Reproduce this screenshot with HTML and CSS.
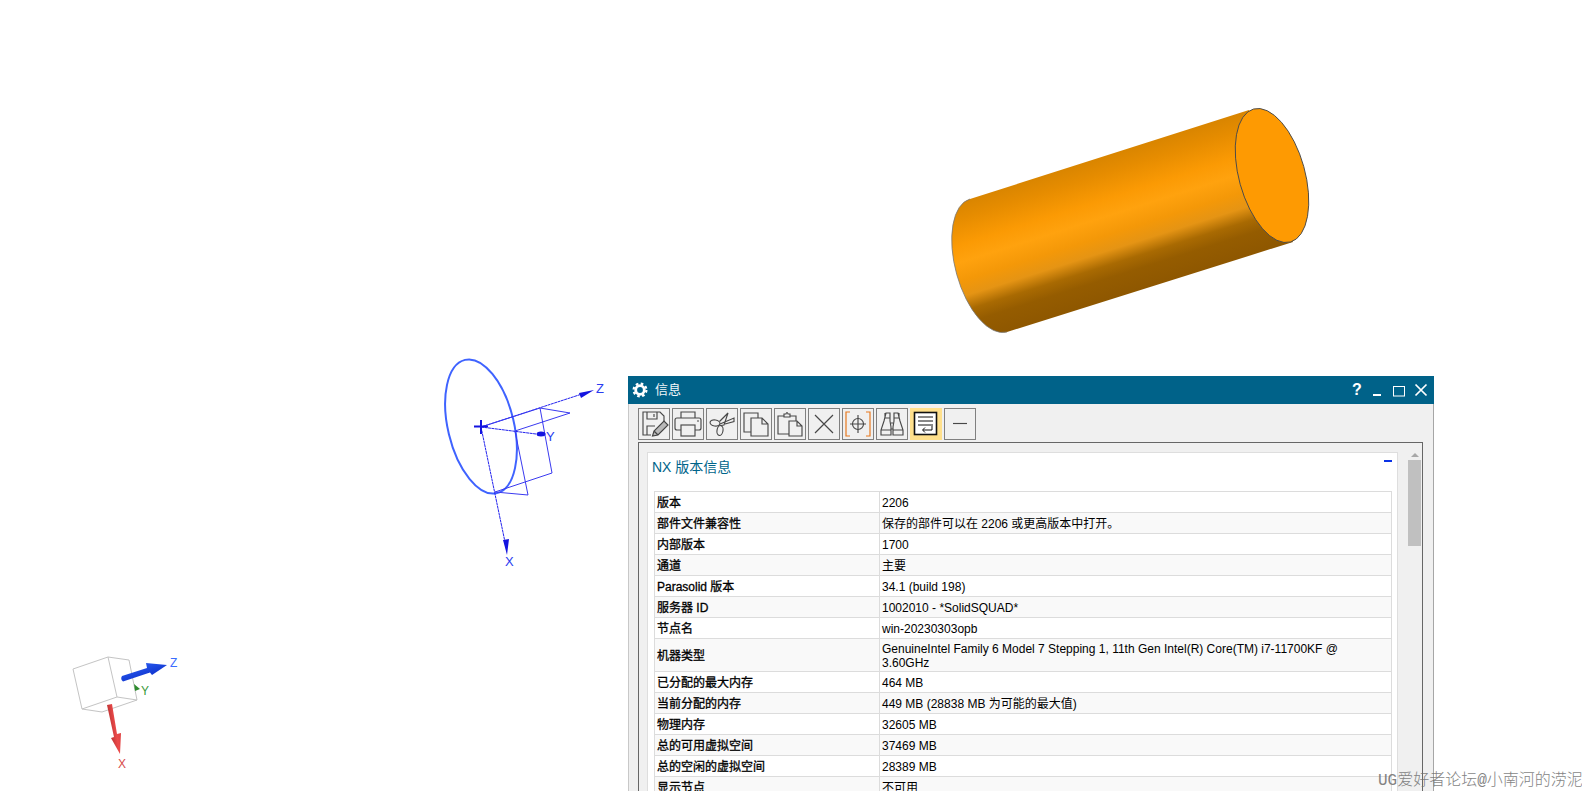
FILE: index.html
```html
<!DOCTYPE html>
<html lang="zh-CN">
<head>
<meta charset="utf-8">
<title>信息</title>
<link rel="stylesheet" href="styles.css">
</head>
<body>
<main class="canvas">
  <svg class="scene" width="1582" height="791" viewBox="0 0 1582 791" xmlns="http://www.w3.org/2000/svg">
    <defs>
      <linearGradient id="cyl" gradientUnits="userSpaceOnUse" x1="1250" y1="110" x2="1291.7" y2="242.2">
        <stop offset="0" stop-color="#d98500"/>
        <stop offset=".12" stop-color="#e68c00"/>
        <stop offset=".3" stop-color="#fb9a04"/>
        <stop offset=".42" stop-color="#ffa20e"/>
        <stop offset=".55" stop-color="#f49808"/>
        <stop offset=".66" stop-color="#e59414"/>
        <stop offset=".76" stop-color="#a96a02"/>
        <stop offset=".85" stop-color="#955c00"/>
        <stop offset="1" stop-color="#8e5700"/>
      </linearGradient>
      <linearGradient id="xarrow" gradientUnits="userSpaceOnUse" x1="107" y1="730" x2="122" y2="728">
        <stop offset="0" stop-color="#a82a2a"/><stop offset=".6" stop-color="#ec4a4a"/><stop offset="1" stop-color="#d94040"/>
      </linearGradient>
      <linearGradient id="zarrow" gradientUnits="userSpaceOnUse" x1="140" y1="663" x2="146" y2="681">
        <stop offset="0" stop-color="#2a5cf0"/><stop offset="1" stop-color="#0a2cc8"/>
      </linearGradient>
    </defs>

    <path d="M1249 110 L970 199 A69 33 74.5 0 0 1007 332 L1293 242 Z" fill="url(#cyl)"/>
    <path d="M970 199 A69 33 74.5 0 0 1007 332" fill="none" stroke="#777" stroke-width=".8"/>
    <ellipse cx="1272" cy="175.5" rx="69" ry="33" transform="rotate(74.5 1272 175.5)" fill="#fe9a02" stroke="#4a4a4a" stroke-width=".9"/>

    <g class="datum">
      <ellipse class="datum-ring" cx="481" cy="426.5" rx="68.500" ry="33" transform="rotate(76.5 481 426.5)"/>
      <path class="datum-line" d="M481 427L582 394M481 427L505 542M481 427L536 434"/>
      <path class="datum-plane" d="M481 427L540 408L570 413L515 431L528 495L495 492L552 473L540 408"/>
      <path class="datum-cross" d="M474 426.5H488M481 420V434"/>
      <path class="datum-head" d="M594 390L579 393L581 398Z"/>
      <path class="datum-head" d="M507 555L503 540L509 539Z"/>
      <ellipse class="datum-head" cx="541" cy="434" rx="4.500" ry="2.500"/>
      <text class="datum-label" x="596" y="393">Z</text>
      <text class="datum-label" x="546" y="441">Y</text>
      <text class="datum-label" x="505" y="566">X</text>
    </g>

    <g class="gizmo">
      <path class="gizmo-cube" d="M73 669L108 657L129 660L137 700L102 712L82 709ZM108 657L117 697L82 709M117 697L137 700"/>
      <path d="M122 676L147 668L146 663L167 665L152 675L150 672.500L123 681.500Q120 679 122 676Z" fill="url(#zarrow)"/>
      <path d="M134 684L140 689L135 691Z" fill="#2e8b2e"/>
      <path d="M107 705L112 704L117 734L121 733L120 754L111 738L114 737Z" fill="url(#xarrow)"/>
      <text class="gizmo-z" x="170" y="667">Z</text>
      <text class="gizmo-y" x="141" y="695">Y</text>
      <text class="gizmo-x" x="118" y="768">X</text>
    </g>
  </svg>

  <section class="dialog">
    <header class="titlebar">
      <svg class="gear" width="16" height="16" viewBox="0 0 16 16">
        <circle cx="8" cy="8" r="4.3" fill="none" stroke="#fff" stroke-width="2.8"/>
        <circle cx="8" cy="8" r="6.4" fill="none" stroke="#fff" stroke-width="2.2" stroke-dasharray="2.6 2.42"/>
      </svg>
      <span class="title">信息</span>
      <div class="window-controls">
        <span class="help">?</span>
        <svg width="14" height="14" viewBox="0 0 14 14"><path d="M3 12H11" stroke="#fff" stroke-width="2"/></svg>
        <svg width="14" height="14" viewBox="0 0 14 14"><rect x="1.5" y="3.5" width="11" height="9.5" fill="none" stroke="#fff"/></svg>
        <svg width="14" height="14" viewBox="0 0 14 14"><path d="M1.5 1.5L12.5 12.5M12.5 1.5L1.5 12.5" stroke="#fff" stroke-width="1.7"/></svg>
      </div>
    </header>

    <div class="toolbar">
      <button class="tool" type="button"><svg viewBox="0 0 30 30"><path d="M12 26H4V3H21L25 7V13"/><path d="M8 3V10H18V3M8 26V17H16M15 5V8"/><path class="thick" d="M13.500 27L15 22L25 12L29 16L19 26ZM15 22L19 26"/></svg></button>
      <button class="tool" type="button"><svg viewBox="0 0 30 30"><path d="M8 9V3H22V9"/><path d="M8 21H4Q2 21 2 19V11Q2 9 4 9H26Q28 9 28 11V19Q28 21 26 21H22"/><rect x="8" y="16" width="14" height="11"/><path d="M24 12H26"/></svg></button>
      <button class="tool" type="button"><svg viewBox="0 0 30 30"><ellipse cx="8" cy="14" rx="5" ry="3" transform="rotate(10 8 14)"/><ellipse cx="13" cy="21.500" rx="3" ry="5" transform="rotate(10 13 21.500)"/><path d="M12.500 12.500L21 4L17 16L14 16.500M13 15L27 9L27 12.500L18 15"/></svg></button>
      <button class="tool" type="button"><svg viewBox="0 0 30 30"><path d="M10 23H3V4H17V9"/><path d="M10 9H21L27 15V27H10ZM21 9V15H27"/></svg></button>
      <button class="tool" type="button"><svg viewBox="0 0 30 30"><path d="M14 25H3V7H9M15 7H21V12"/><path d="M9 7V5H11Q12 2 13 5H15V8H9Z"/><path d="M14 12H22L27 17V27H14ZM22 12V17H27"/></svg></button>
      <button class="tool" type="button"><svg viewBox="0 0 30 30"><path d="M6 6L24 24M24 6L6 24"/></svg></button>
      <button class="tool" type="button"><svg viewBox="0 0 30 30"><path class="orange" d="M7 3H3V27H7M23 3H27V27H23"/><circle cx="15" cy="15" r="5.500"/><path d="M15 6V24M7 15H23"/></svg></button>
      <button class="tool" type="button"><svg viewBox="0 0 30 30"><path d="M9 4H13V12L14 18V26H4V21L7 12ZM21 4H17V12L16 18V26H26V21L23 12ZM14 14H16M16 20H14M8 4V9H13M22 4V9H17M4 21H14M16 21H26"/></svg></button>
      <button class="tool tool-on" type="button"><svg viewBox="0 0 30 30"><rect class="page" x="3.500" y="3.500" width="22" height="22"/><path class="ink" d="M7 8H22M7 12H22M7 16H22M21 17V21H12M14 18.500L11.500 21L14 23.500"/></svg></button>
      <button class="tool" type="button"><svg viewBox="0 0 30 30"><path d="M8 14.500H22"/></svg></button>
    </div>

    <div class="panel">
      <div class="sheet">
        <div class="sheet-head">
          <h1 class="sheet-title">NX 版本信息</h1>
          <span class="collapse"></span>
        </div>
        <table class="info">
          <colgroup><col class="col-key"><col></colgroup>
          <tbody>
            <tr><th>版本</th><td>2206</td></tr>
            <tr><th>部件文件兼容性</th><td>保存的部件可以在 2206 或更高版本中打开。</td></tr>
            <tr><th>内部版本</th><td>1700</td></tr>
            <tr><th>通道</th><td>主要</td></tr>
            <tr><th>Parasolid 版本</th><td>34.1 (build 198)</td></tr>
            <tr><th>服务器 ID</th><td>1002010 - *SolidSQUAD*</td></tr>
            <tr><th>节点名</th><td>win-20230303opb</td></tr>
            <tr><th>机器类型</th><td>GenuineIntel Family 6 Model 7 Stepping 1, 11th Gen Intel(R) Core(TM) i7-11700KF @ 3.60GHz</td></tr>
            <tr><th>已分配的最大内存</th><td>464 MB</td></tr>
            <tr><th>当前分配的内存</th><td>449 MB (28838 MB 为可能的最大值)</td></tr>
            <tr><th>物理内存</th><td>32605 MB</td></tr>
            <tr><th>总的可用虚拟空间</th><td>37469 MB</td></tr>
            <tr><th>总的空闲的虚拟空间</th><td>28389 MB</td></tr>
            <tr><th>显示节点</th><td>不可用</td></tr>
          </tbody>
        </table>
      </div>
      <div class="scrollbar">
        <span class="scroll-up"></span>
        <span class="scroll-thumb"></span>
      </div>
    </div>
  </section>

  <div class="watermark">UG爱好者论坛@小南河的涝泥</div>
</main>
</body>
</html>
```

FILE: styles.css
```css
* { box-sizing: border-box; }

html, body {
  margin: 0;
  height: 100%;
  overflow: hidden;
  background: #fff;
}

.canvas {
  position: relative;
  width: 1582px;
  height: 791px;
  overflow: hidden;
  font-family: "Liberation Sans", "Noto Sans CJK SC", sans-serif;
  font-size: 12px;
  color: #000;
}

.scene {
  position: absolute;
  left: 0;
  top: 0;
  display: block;
}

.datum-ring { fill: none; stroke: #3f63ff; stroke-width: 2; }
.datum-line { fill: none; stroke: #2222ee; stroke-width: 1; stroke-dasharray: 3 .5; }
.datum-plane { fill: none; stroke: #3a3af0; stroke-width: 1; }
.datum-cross { fill: none; stroke: #1414e0; stroke-width: 2; }
.datum-head { fill: #1414e0; }
.datum-label { fill: #2a3cf0; font-family: "Liberation Sans", sans-serif; font-size: 13px; }

.gizmo-cube { fill: none; stroke: #c4c4c4; stroke-width: 1; }
.gizmo-z, .gizmo-y, .gizmo-x { font-family: "Liberation Sans", sans-serif; font-size: 12px; }
.gizmo-z { fill: #3a6cff; }
.gizmo-y { fill: #3a9a3a; }
.gizmo-x { fill: #d84a4a; }

.dialog {
  position: absolute;
  left: 628px;
  top: 376px;
  width: 806px;
  height: 415px;
  display: flex;
  flex-direction: column;
  background: #f0f0f0;
  border-right: 1px solid #a6a6a6;
  border-left: 1px solid #c8c8c8;
}

.titlebar {
  flex: none;
  height: 28px;
  margin: 0 -1px 0 -1px;
  padding: 0 6px 0 4px;
  display: flex;
  align-items: center;
  background: #006289;
  color: #fff;
}

.gear { flex: none; }

.title {
  margin: -3px 0 0 7px;
  font-size: 13px;
  color: #f2f7fa;
}

.window-controls {
  margin-left: auto;
  display: flex;
  align-items: center;
  gap: 8px;
}

.window-controls svg { display: block; }

.help {
  width: 14px;
  margin-right: -2px;
  text-align: center;
  font-size: 16px;
  font-weight: 700;
  line-height: 16px;
}

.toolbar {
  flex: none;
  display: flex;
  gap: 2px;
  margin: 4px 0 0 9px;
  height: 32px;
}

.tool {
  width: 32px;
  height: 32px;
  margin: 0;
  padding: 0;
  border: 1px solid #808080;
  background: #f0f0f0;
}

.tool svg {
  display: block;
  width: 30px;
  height: 30px;
  fill: none;
  stroke: #484848;
  stroke-width: 1.15;
}

.tool .thick { stroke: #444; fill: #b8b8b8; }
.tool .orange { stroke: #e8791e; stroke-width: 1.2; }

.tool-on {
  border-color: #ffe08c;
  background: #ffe08c;
}

.tool .page { fill: #fff; stroke: #111; stroke-width: 1.6; }
.tool .ink { stroke: #111; stroke-width: 1; }

.panel {
  flex: 1;
  min-height: 0;
  display: flex;
  margin: 2px 10px 0 9px;
  padding: 9px 1px 0 8px;
  border: 1px solid #666;
  border-bottom: 0;
  overflow: hidden;
}

.sheet {
  flex: none;
  width: 751px;
  padding: 0 6px;
  background: #fff;
  border: 1px solid #dedede;
  border-bottom: 0;
  overflow: hidden;
}

.sheet-head {
  height: 38px;
  display: flex;
  justify-content: space-between;
}

.sheet-title {
  margin: 4px 0 0 -2px;
  font-size: 14px;
  font-weight: 400;
  line-height: 20px;
  color: #00648a;
}

.collapse {
  width: 8px;
  height: 2px;
  margin: 7px -1px 0 0;
  background: #0a32e6;
}

.info {
  width: 738px;
  table-layout: fixed;
  border-collapse: collapse;
  line-height: 14px;
}

.col-key { width: 225px; }

.info th, .info td {
  height: 21px;
  padding: 3px 8px 1px 2px;
  border: 1px solid #dcdcdc;
  vertical-align: middle;
  text-align: left;
  font-weight: 400;
}

.info th {
  -webkit-text-stroke: .3px #000;
}

.info tr:nth-child(even) { background: #f9f9f9; }

.scrollbar {
  flex: none;
  width: 13px;
  margin-left: 10px;
  padding-top: 5px;
  margin-top: -1px;
}

.scroll-up {
  display: block;
  width: 0;
  height: 0;
  margin: -3px auto 3px;
  border-left: 4px solid transparent;
  border-right: 4px solid transparent;
  border-bottom: 4px solid #a8a8a8;
}

.scroll-thumb {
  display: block;
  height: 86px;
  background: #c0c0c0;
}

.watermark {
  position: absolute;
  left: 1378px;
  top: 772px;
  font-family: "Liberation Mono", "Noto Sans CJK SC", monospace;
  font-size: 16px;
  font-weight: 300;
  line-height: 18px;
  white-space: nowrap;
  color: #6e6e6e;
  opacity: .85;
}
```
